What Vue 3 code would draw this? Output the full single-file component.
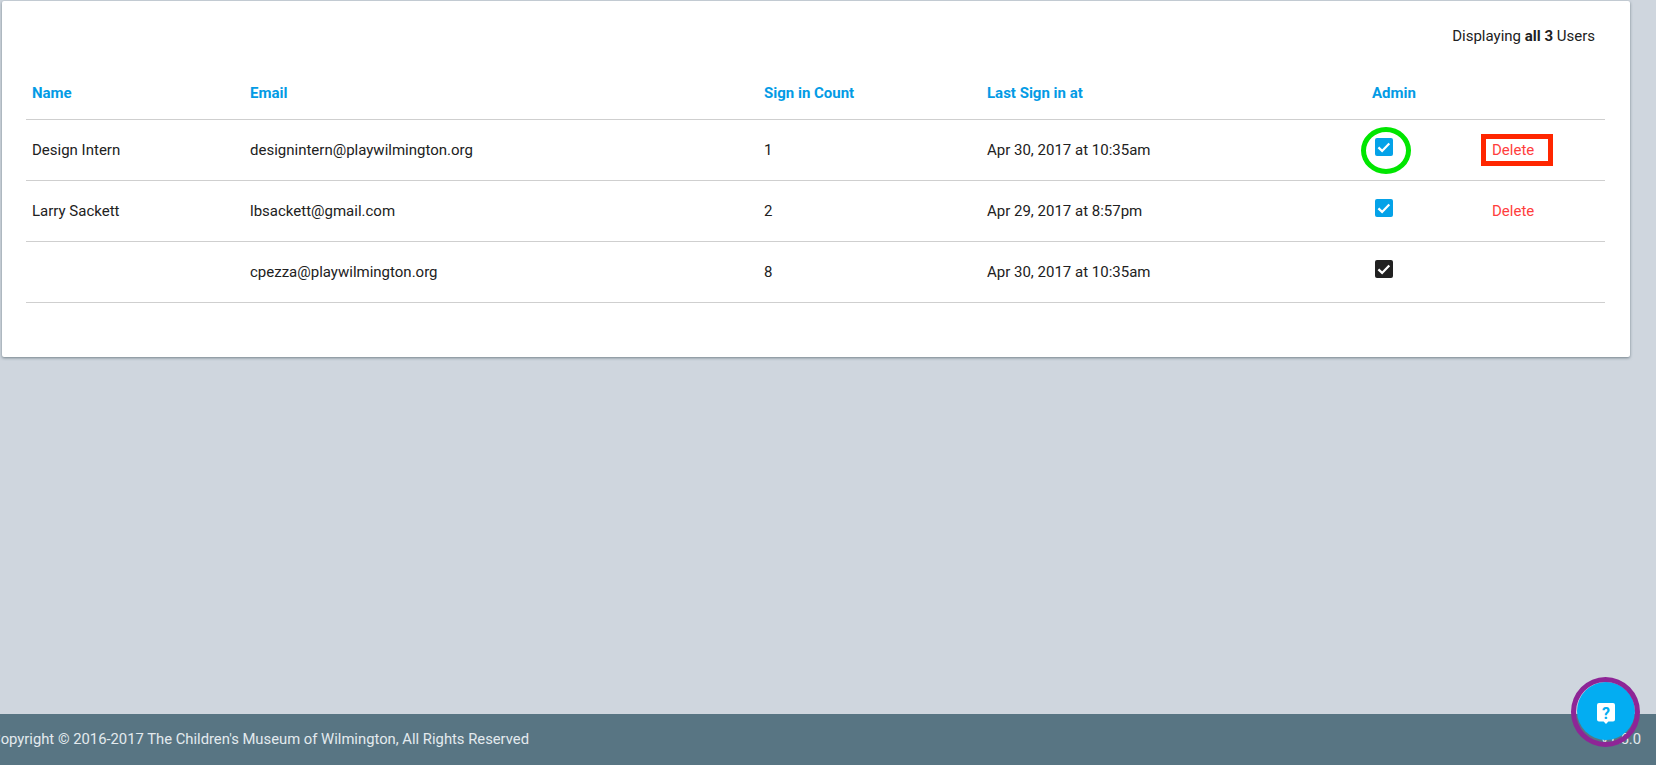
<script setup>
const users = [
  { name: "Design Intern", email: "designintern@playwilmington.org", count: 1, last: "Apr 30, 2017 at 10:35am", color: "blue", canDelete: true, circled: true },
  { name: "Larry Sackett", email: "lbsackett@gmail.com", count: 2, last: "Apr 29, 2017 at 8:57pm", color: "blue", canDelete: true },
  { name: "", email: "cpezza@playwilmington.org", count: 8, last: "Apr 30, 2017 at 10:35am", color: "dark", canDelete: false },
];
</script>

<template>
  <div class="page">
    <main class="content">
      <section class="card">
        <p class="summary">Displaying <b>all 3</b> Users</p>
        <table class="users">
          <thead>
            <tr>
              <th class="c-name">Name</th>
              <th class="c-email">Email</th>
              <th class="c-count">Sign in Count</th>
              <th class="c-last">Last Sign in at</th>
              <th class="c-admin">Admin</th>
              <th class="c-del"></th>
            </tr>
          </thead>
          <tbody>
            <tr v-for="(user, i) in users" :key="user.email">
              <td>{{ user.name }}</td>
              <td>{{ user.email }}</td>
              <td>{{ user.count }}</td>
              <td>{{ user.last }}</td>
              <td>
                <span class="check" :class="user.color">
                  <svg viewBox="0 0 18 18" width="18" height="18">
                    <path d="M3.4 9.4l3.7 3.5 7.2-7.4" fill="none" stroke="#fff" stroke-width="2.2" />
                  </svg>
                  <i v-if="user.circled" class="ring"></i>
                </span>
              </td>
              <td>
                <span v-if="user.canDelete" class="delete">
                  Delete
                  <i v-if="i === 0" class="box"></i>
                </span>
              </td>
            </tr>
          </tbody>
        </table>
      </section>
    </main>
    <footer class="footer">
      <span class="copy">Copyright © 2016-2017 The Children's Museum of Wilmington, All Rights Reserved</span>
      <span class="version">v1.5.0</span>
      <button class="help" type="button" aria-label="Help">
        <svg class="help-icon" viewBox="0 0 18 21" width="18" height="21">
          <path d="M2 0h14a2 2 0 0 1 2 2v14.5a2 2 0 0 1-2 2h-4.6L9 21l-2.4-2.5H2a2 2 0 0 1-2-2V2a2 2 0 0 1 2-2z" fill="#fff" />
          <text x="9" y="15.5" text-anchor="middle" class="help-mark">?</text>
        </svg>
        <i class="help-ring"></i>
      </button>
    </footer>
  </div>
</template>

<style>
html, body {
  margin: 0;
  overflow: hidden;
}
</style>

<style scoped>
.page {
  width: 1656px;
  height: 765px;
  display: flex;
  flex-direction: column;
  background: #cfd6de;
  font-family: Roboto, "Liberation Sans", sans-serif;
  font-size: 15px;
  color: #212121;
}
.content {
  flex: 1;
  padding: 1px 26px 0 2px;
}
.card {
  height: 356px;
  box-sizing: border-box;
  padding: 0 25px 0 24px;
  background: #fff;
  border-radius: 2px;
  box-shadow: 0 1px 3px rgba(40, 60, 70, 0.55);
}
.summary {
  margin: 0;
  padding: 26px 10px 0 0;
  height: 47px;
  text-align: right;
  line-height: 18px;
}
.summary b {
  font-weight: 700;
}
.users {
  width: 100%;
  border-collapse: collapse;
  table-layout: fixed;
}
.users th {
  height: 45px;
  padding: 0 6px 6px;
  box-sizing: border-box;
  text-align: left;
  color: #039be5;
  font-weight: 700;
  border-bottom: 1px solid #cfcfcf;
}
.users td {
  height: 61px;
  padding: 0 6px;
  box-sizing: border-box;
  border-bottom: 1px solid #cfcfcf;
}
.c-name { width: 218px; }
.c-email { width: 514px; }
.c-count { width: 223px; }
.c-last { width: 385px; }
.c-admin { width: 120px; }
.check {
  position: relative;
  display: inline-block;
  width: 18px;
  height: 18px;
  margin: 0 0 5px 3px;
  vertical-align: middle;
  border-radius: 2px;
}
.check svg {
  display: block;
}
.check.blue {
  background: #04a2e8;
}
.check.dark {
  background: #212121;
}
.ring {
  position: absolute;
  left: -14px;
  top: -11px;
  width: 50px;
  height: 47px;
  box-sizing: border-box;
  border: 5px solid #00e600;
  border-radius: 50%;
}
.delete {
  position: relative;
  display: inline-block;
  color: #ff3d3d;
}
.box {
  position: absolute;
  left: -11px;
  top: -7px;
  width: 72px;
  height: 32px;
  box-sizing: border-box;
  border: 5px solid #ff2600;
}
.footer {
  position: relative;
  height: 51px;
  flex: none;
  display: flex;
  align-items: center;
  justify-content: space-between;
  padding-bottom: 2px;
  box-sizing: border-box;
  background: #587583;
  color: #e3eaee;
  font-size: 14.8px;
}
.copy {
  margin-left: -9px;
}
.version {
  margin-right: 15px;
}
.help {
  position: absolute;
  right: 21px;
  bottom: 25px;
  width: 58px;
  height: 58px;
  padding: 0;
  border: 0;
  border-radius: 50%;
  background: #03adf2;
  display: flex;
  align-items: center;
  justify-content: center;
}
.help-icon {
  margin-top: 4px;
}
.help-ring {
  position: absolute;
  left: -6px;
  top: -5px;
  width: 69px;
  height: 70px;
  box-sizing: border-box;
  border: 5px solid #8e2596;
  border-radius: 50%;
}
.help-mark {
  font-family: Roboto, sans-serif;
  font-size: 16px;
  font-weight: 700;
  fill: #03adf2;
}
</style>
